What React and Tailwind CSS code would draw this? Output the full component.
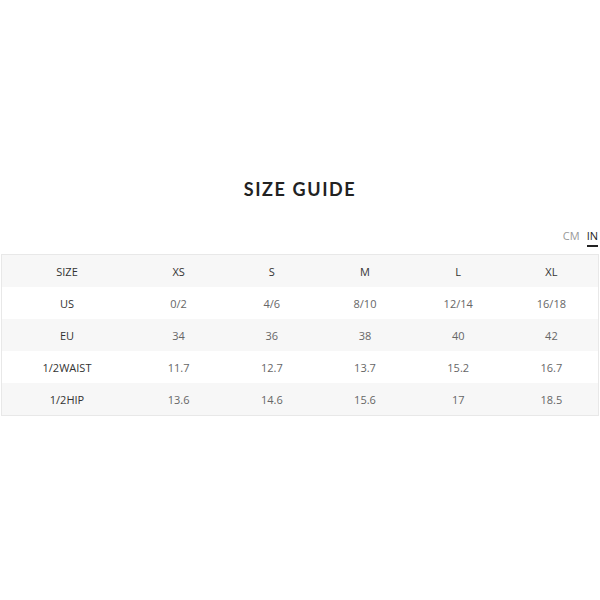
export default function App() {
  const headers = ["SIZE", "XS", "S", "M", "L", "XL"];
  const rows = [
    ["US", "0/2", "4/6", "8/10", "12/14", "16/18"],
    ["EU", "34", "36", "38", "40", "42"],
    ["1/2WAIST", "11.7", "12.7", "13.7", "15.2", "16.7"],
    ["1/2HIP", "13.6", "14.6", "15.6", "17", "18.5"],
  ];
  const all = [headers, ...rows];
  return (
    <div className="w-[600px] h-[600px] bg-white flex flex-col" style={{ fontFamily: '"Open Sans", sans-serif' }}>
      <div className="pt-[178px] h-[200px] flex justify-center">
        <h1 className="text-[18px] leading-[22px] font-bold tracking-[1.6px] text-[#222]" style={{ fontFamily: 'Lato, sans-serif' }}>SIZE GUIDE</h1>
      </div>
      <div className="mt-[28px] flex justify-end gap-[7px] pr-[2px] text-[11px] leading-[16px]">
        <span className="text-[#999]">CM</span>
        <span className="text-[#222] border-b-2 border-[#222] pb-[1px]">IN</span>
      </div>
      <div className="mt-[7px] mx-[1px] border border-[#e8e8e8]">
        {all.map((r, i) => (
          <div key={i} className={`grid grid-cols-[130px_repeat(5,1fr)] h-[32px] pt-[2px] items-center text-[11px] ${i % 2 === 0 ? "bg-[#f7f7f7]" : "bg-white"}`}>
            {r.map((c, j) => (
              <div key={j} className={`text-center ${j === 0 || i === 0 ? "text-[#333]" : "text-[#666]"}`}>{c}</div>
            ))}
          </div>
        ))}
      </div>
    </div>
  );
}
